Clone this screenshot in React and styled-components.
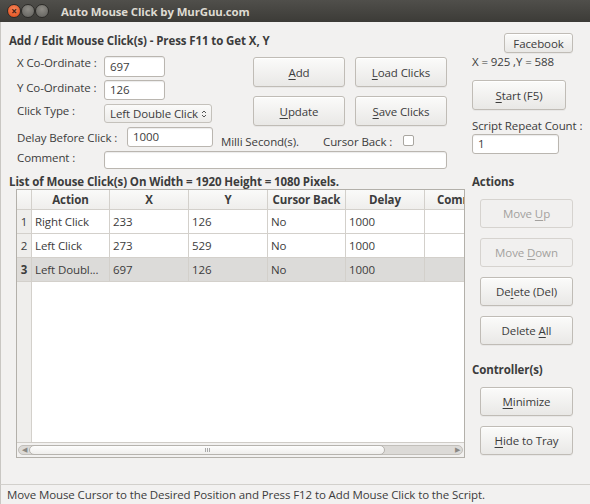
import React from 'react';
import styled, { createGlobalStyle } from 'styled-components';

const GlobalStyle = createGlobalStyle`
  html, body { margin: 0; padding: 0; background: #f2f1f0; }
  body {
    font-family: "Open Sans", "Noto Sans", sans-serif;
    font-size: 11.5px;
    letter-spacing: -0.1px;
    color: #3c3c3c;
  }
  * { box-sizing: border-box; }
`;

const Window = styled.div`
  width: 590px;
  height: 504px;
  display: flex;
  flex-direction: column;
  background: #f2f1f0;
  overflow: hidden;
`;

const TitleBar = styled.div`
  height: 22px;
  display: flex;
  align-items: center;
  padding-left: 7px;
  background: linear-gradient(#504f4b, #3c3b37);
  color: #dfdbd2;
  font-weight: bold;
  font-size: 11.4px;
`;

const WinBtn = styled.span`
  width: 14px;
  height: 14px;
  border-radius: 50%;
  margin-right: ${p => (p.last ? '12px' : '0')};
  background: ${p => (p.close
    ? 'radial-gradient(circle at 50% 35%, #f7855a, #df4a16)'
    : 'radial-gradient(circle at 50% 35%, #8e8c86, #5f5e5a)')};
  border: 1px solid #2c2b28;
  display: flex;
  align-items: center;
  justify-content: center;
  color: #3b2115;
  font-size: 10px;
  line-height: 1;
`;

const Body = styled.div`
  flex: 1;
  display: flex;
  border-left: 1px solid #c9c7c3;
`;

const LeftCol = styled.div`
  width: 456px;
  margin-left: 8px;
  display: flex;
  flex-direction: column;
`;

const RightCol = styled.div`
  width: 118px;
  margin-left: 7px;
  display: flex;
  flex-direction: column;
`;

const Heading = styled.div`
  font-weight: bold;
  line-height: 14px;
  margin-top: ${p => p.top || 0}px;
  margin-left: ${p => p.left || 0}px;
`;

const FormTop = styled.div`
  display: flex;
  margin-top: 8px;
  padding-left: 8px;
`;

const Fields = styled.div`
  width: 196px;
  display: flex;
  flex-direction: column;
`;

const FieldRow = styled.div`
  display: flex;
  align-items: ${p => (p.top ? 'flex-start' : 'center')};
  margin-top: ${p => p.gap || 0}px;
`;

const Label = styled.span`
  width: ${p => p.w}px;
  flex-shrink: 0;
  line-height: 14px;
  margin-top: ${p => p.dy || 0}px;
`;

const Input = styled.div`
  width: ${p => p.w}px;
  height: ${p => p.h}px;
  margin-top: ${p => p.top || 0}px;
  background: #fff;
  border: 1px solid #bab6b0;
  border-radius: 3px;
  box-shadow: inset 0 1px 1px rgba(0, 0, 0, 0.08);
  padding-left: 5px;
  display: flex;
  align-items: center;
  line-height: 1;
`;

const Select = styled.div`
  width: 108px;
  height: 19px;
  border: 1px solid #c4c1bb;
  border-radius: 3px;
  background: linear-gradient(#fbfbfa, #ecebe9);
  display: flex;
  align-items: center;
  justify-content: space-between;
  padding: 0 4px 0 5px;
  white-space: nowrap;
`;

const ButtonGrid = styled.div`
  display: grid;
  grid-template-columns: 92px 92px;
  grid-auto-rows: 30px;
  column-gap: 10px;
  row-gap: 9px;
  margin-left: 40px;
  margin-top: 1px;
`;

const Button = styled.div`
  width: ${p => p.w || 93}px;
  height: ${p => p.h || 29}px;
  display: flex;
  align-items: center;
  justify-content: center;
  border: 1px solid ${p => (p.disabled ? '#d6d3cf' : '#c0bcb6')};
  border-radius: 3px;
  background: ${p => (p.disabled ? '#f1f0ef' : 'linear-gradient(#fbfbfa, #e9e8e6)')};
  box-shadow: ${p => (p.disabled ? 'none' : 'inset 0 1px 0 #fff, 0 1px 0 rgba(0,0,0,0.04)')};
  color: ${p => (p.disabled ? '#a3a19e' : '#3c3c3c')};
  margin-top: ${p => p.top || 0}px;
  margin-left: ${p => p.left || 0}px;
  align-self: ${p => p.align || 'auto'};
  margin-right: ${p => p.right || 0}px;
  white-space: pre;
`;

const Mn = styled.span`
  text-decoration: underline;
  text-underline-offset: 2px;
`;

const DelayRow = styled.div`
  display: flex;
  align-items: center;
  margin-top: 1px;
  padding-left: 8px;
  height: 20px;
`;

const Note = styled.span`
  width: ${p => p.w}px;
  flex-shrink: 0;
  margin-left: ${p => p.left || 0}px;
  padding-top: 9px;
  line-height: 14px;
  white-space: nowrap;
`;

const Check = styled.span`
  width: 11px;
  height: 11px;
  border: 1px solid #a9a6a0;
  border-radius: 2px;
  background: #fff;
  margin-top: 6px;
`;

const CommentRow = styled.div`
  display: flex;
  align-items: flex-start;
  margin-top: 4px;
  padding-left: 8px;
`;

const TableFrame = styled.div`
  width: 449px;
  height: 269px;
  margin-left: 7px;
  border: 1px solid #b3b0aa;
  display: flex;
  flex-direction: column;
  background: #f2f1f0;
`;

const Viewport = styled.div`
  flex: 1;
  overflow: hidden;
  background: #fff;
  display: flex;
  flex-direction: column;
  border-bottom: 1px solid #cfccc7;
`;

const cols = '15px 78px 79px 79px 78px 79px 80px';

const Row = styled.div`
  display: grid;
  grid-template-columns: ${cols};
  height: ${p => p.h}px;
  flex-shrink: 0;
  background: ${p => (p.selected ? '#dcdbd9' : '#fff')};
`;

const FillRow = styled.div`
  flex: 1;
  display: grid;
  grid-template-columns: ${cols};
`;

const HeadCell = styled.div`
  display: flex;
  align-items: center;
  justify-content: ${p => (p.clip ? 'flex-start' : 'center')};
  padding-left: ${p => (p.clip ? '12px' : '0')};
  font-weight: bold;
  border-right: 1px solid #d3d0cb;
  border-bottom: 1px solid #d3d0cb;
  background: linear-gradient(#fafaf9, #efeeec);
  white-space: nowrap;
  overflow: hidden;
`;

const NumCell = styled.div`
  display: flex;
  align-items: center;
  justify-content: center;
  background: ${p => (p.selected ? '#dedcd9' : '#efeeec')};
  font-weight: ${p => (p.selected ? 'bold' : 'normal')};
  border-right: 1px solid #d3d0cb;
  border-bottom: ${p => (p.fill ? 'none' : '1px solid #d3d0cb')};
`;

const Cell = styled.div`
  display: flex;
  align-items: center;
  padding-left: 3px;
  border-right: 1px solid #d3d0cb;
  border-bottom: 1px solid #d3d0cb;
  white-space: nowrap;
  overflow: hidden;
`;

const ScrollArea = styled.div`
  height: 14px;
  flex-shrink: 0;
  display: flex;
  align-items: center;
  padding: 0 1px;
`;

const ScrollTrack = styled.div`
  flex: 1;
  height: 10px;
  border: 1px solid #c2bfba;
  border-radius: 5px;
  background: #dcdad7;
  display: flex;
  align-items: center;
`;

const Arrow = styled.span`
  width: 10px;
  font-size: 7px;
  color: #8a8884;
  text-align: center;
  line-height: 8px;
`;

const Thumb = styled.div`
  width: 356px;
  height: 10px;
  border: 1px solid #b6b3ae;
  border-radius: 5px;
  background: linear-gradient(#fdfdfd, #efeeec);
  display: flex;
  align-items: center;
  justify-content: center;
`;

const Grip = styled.span`
  width: 5px;
  height: 4px;
  border-left: 1px solid #aaa;
  border-right: 1px solid #aaa;
  position: relative;
  &::after {
    content: '';
    position: absolute;
    left: 1px;
    top: 0;
    width: 1px;
    height: 4px;
    background: #aaa;
  }
`;

const TrackFill = styled.div`
  flex: 1;
`;

const InfoText = styled.div`
  line-height: 14px;
  margin-top: ${p => p.top || 0}px;
  white-space: nowrap;
`;

const StatusBar = styled.div`
  height: 20px;
  border-top: 1px solid #d2d0cc;
  border-left: 1px solid #c9c7c3;
  display: flex;
  align-items: center;
  padding-left: 6px;
  white-space: nowrap;
`;

const rows = [
  ['1', 'Right Click', '233', '126', 'No', '1000', ''],
  ['2', 'Left Click', '273', '529', 'No', '1000', ''],
  ['3', 'Left Doubl...', '697', '126', 'No', '1000', ''],
];

const heads = ['Action', 'X', 'Y', 'Cursor Back', 'Delay'];

const SpinIcon = () => (
  <svg width="6" height="10" viewBox="0 0 6 10">
    <path d="M1 4 L3 2 L5 4" fill="none" stroke="#555" strokeWidth="1" />
    <path d="M1 6 L3 8 L5 6" fill="none" stroke="#555" strokeWidth="1" />
  </svg>
);

export default function App() {
  return (
    <Window>
      <GlobalStyle />
      <TitleBar>
        <WinBtn close>×</WinBtn>
        <WinBtn />
        <WinBtn last />
        Auto Mouse Click by MurGuu.com
      </TitleBar>
      <Body>
        <LeftCol>
          <Heading top={12}>Add / Edit Mouse Click(s) - Press F11 to Get X, Y</Heading>
          <FormTop>
            <Fields>
              <FieldRow>
                <Label w={87} dy={-7}>X Co-Ordinate :</Label>
                <Input w={61} h={21}>697</Input>
              </FieldRow>
              <FieldRow gap={3}>
                <Label w={87} dy={-4}>Y Co-Ordinate :</Label>
                <Input w={61} h={20}>126</Input>
              </FieldRow>
              <FieldRow gap={4}>
                <Label w={87} dy={-6}>Click Type :</Label>
                <Select>
                  <span>Left Double Click</span>
                  <SpinIcon />
                </Select>
              </FieldRow>
            </Fields>
            <ButtonGrid>
              <Button w={92} h={30}><span><Mn>A</Mn>dd</span></Button>
              <Button w={92} h={30}><span><Mn>L</Mn>oad Clicks</span></Button>
              <Button w={92} h={30}><span><Mn>U</Mn>pdate</span></Button>
              <Button w={92} h={30}><span><Mn>S</Mn>ave Clicks</span></Button>
            </ButtonGrid>
          </FormTop>
          <DelayRow>
            <Label w={110} dy={1}>Delay Before Click :</Label>
            <Input w={86} h={20}>1000</Input>
            <Note w={102} left={8}>Milli Second(s).</Note>
            <Note w={80}>Cursor Back :</Note>
            <Check />
          </DelayRow>
          <CommentRow>
            <Label w={87}>Comment :</Label>
            <Input w={343} h={18} />
          </CommentRow>
          <Heading top={6}>List of Mouse Click(s) On Width = 1920 Height = 1080 Pixels.</Heading>
          <TableFrame>
            <Viewport>
              <Row h={20}>
                <HeadCell />
                {heads.map(h => <HeadCell key={h}>{h}</HeadCell>)}
                <HeadCell clip>Comm</HeadCell>
              </Row>
              {rows.map(r => (
                <Row key={r[0]} h={24} selected={r[0] === '3'}>
                  <NumCell selected={r[0] === '3'}>{r[0]}</NumCell>
                  {r.slice(1).map((c, i) => <Cell key={i}>{c}</Cell>)}
                </Row>
              ))}
              <FillRow>
                <NumCell fill />
              </FillRow>
            </Viewport>
            <ScrollArea>
              <ScrollTrack>
                <Arrow>◀</Arrow>
                <Thumb><Grip /></Thumb>
                <TrackFill />
                <Arrow>▶</Arrow>
              </ScrollTrack>
            </ScrollArea>
          </TableFrame>
        </LeftCol>
        <RightCol>
          <Button w={69} h={20} top={11} align="flex-end" right={17}>Facebook</Button>
          <InfoText top={2}>X = 925 ,Y = 588</InfoText>
          <Button w={94} h={30} top={11}><span><Mn>S</Mn>tart (F5)</span></Button>
          <InfoText top={9}>Script Repeat Count :</InfoText>
          <Input w={87} h={20} top={1}>1</Input>
          <Heading top={21}>Actions</Heading>
          <Button top={10} left={8} disabled><span>Move <Mn>U</Mn>p</span></Button>
          <Button top={10} left={8} disabled><span>Move <Mn>D</Mn>own</span></Button>
          <Button top={10} left={8}><span>De<Mn>l</Mn>ete (Del)</span></Button>
          <Button top={10} left={8}><span>Delete <Mn>A</Mn>ll</span></Button>
          <Heading top={18}>Controller(s)</Heading>
          <Button top={10} left={8}><span><Mn>M</Mn>inimize</span></Button>
          <Button top={10} left={8}><span><Mn>H</Mn>ide to Tray</span></Button>
        </RightCol>
      </Body>
      <StatusBar>Move Mouse Cursor to the Desired Position and Press F12 to Add Mouse Click to the Script.</StatusBar>
    </Window>
  );
}
